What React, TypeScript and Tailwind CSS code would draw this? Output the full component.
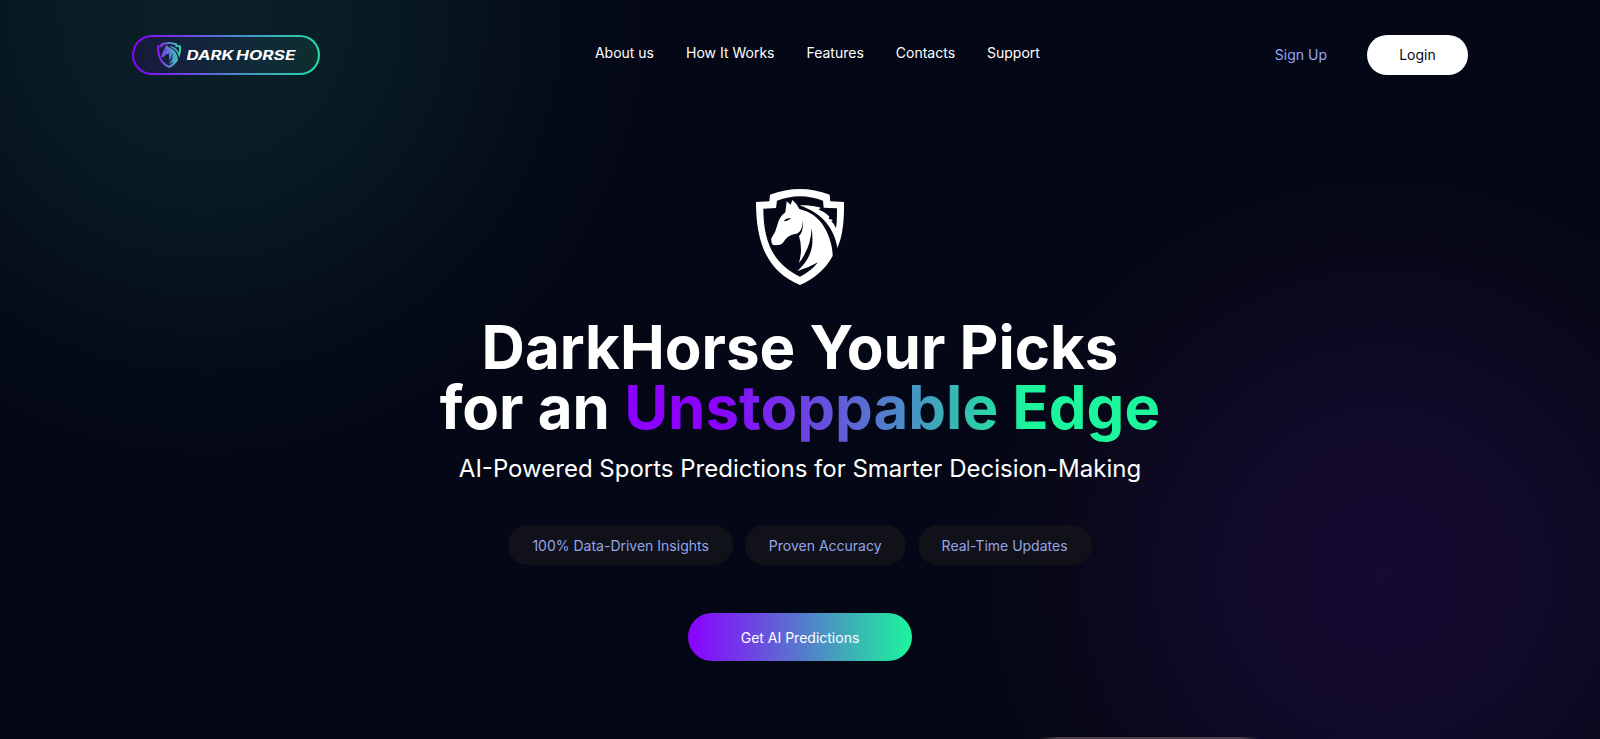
import React from "react";

const navItems = ["About us", "How It Works", "Features", "Contacts", "Support"];
const chips = ["100% Data-Driven Insights", "Proven Accuracy", "Real-Time Updates"];

function HorseShield({ className, fill = "#fff" }: { className?: string; fill?: string }) {
  return (
    <svg className={className} viewBox="168 87 264 288" preserveAspectRatio="none" aria-hidden="true">
      <defs>
        <linearGradient id="brand" gradientUnits="userSpaceOnUse" x1="168" y1="0" x2="432" y2="0">
          <stop offset="0.05" stopColor="#8a1cff" />
          <stop offset="0.5" stopColor="#5b80d8" />
          <stop offset="1" stopColor="#2fe0a5" />
        </linearGradient>
      </defs>
      <path
        fill={fill}
        d="M210 104Q300 70 389 104L391 124L432 126C433 180 428 230 412 264C404 210 370 160 298 136C320 134 345 137 362 143L356 149C370 153 380 161 388 170L386 176L399 180L394 184Q403 192 408 204Q411 190 411 145L371 143L369 122Q300 95 231 122L228 144L190 146C190 245 220 312 300 350Q332 335 354 307Q325 324 292 333C320 308 335 280 337 250Q338 225 335 204Q333 262 297 309Q309 265 297 228Q311 215 309 180Q308 215 290 221C265 224 258 235 250 247Q245 256 228 256L219 255Q212 247 214 235Q228 215 232 195Q238 170 256 157L260 124L272 134L277 120Q290 130 298 147C330 155 355 172 372 200C390 230 398 262 398 288C375 330 340 358 300 375C205 335 168 255 168 126L208 124Z"
      />
      <path d="M251 184Q258 174 273 174Q266 183 251 184Z" fill="#050816" />
    </svg>
  );
}

function Logo() {
  return (
    <a
      href="#"
      className="flex h-10 w-[188px] items-center rounded-full border-2 border-transparent pl-[23px] [background:linear-gradient(90deg,#171a3b,#12283a_50%,#0d2f30)_padding-box,linear-gradient(90deg,#8b00ff,#4e86cc_55%,#22e3a3)_border-box]"
    >
      <HorseShield className="h-[26px] w-6 shrink-0" fill="url(#brand)" />
      <svg
        className="ml-[5px] h-3.5 w-[112px] shrink-0 font-['Inter'] text-[12.5px] font-bold italic"
        viewBox="0 0 112 14"
        fill="#fff"
      >
        <text x="0.5" y="12" textLength="47" lengthAdjust="spacingAndGlyphs">DARK</text>
        <text x="50" y="12" textLength="59.5" lengthAdjust="spacingAndGlyphs">HORSE</text>
      </svg>
    </a>
  );
}

export default function App() {
  return (
    <div className="flex h-[739px] w-full flex-col overflow-hidden bg-[#040715] bg-[radial-gradient(circle_at_205px_15px,#0a1f28_0px,#091d26_120px,#071620_230px,#050d1a_330px,#040916_410px,transparent_490px),radial-gradient(circle_at_1384px_575px,#170930_0px,#130a2d_110px,#0e0924_220px,#080819_330px,#050716_400px,transparent_480px)] font-['Inter',sans-serif] text-white">
      <header className="mx-auto flex w-[1336px] items-center justify-between pt-[35px]">
        <Logo />
        <nav className="-mt-1 ml-[40px] flex gap-8 text-sm leading-5">
          {navItems.map((item) => (
            <a key={item} href="#">{item}</a>
          ))}
        </nav>
        <div className="flex items-center gap-10 text-sm">
          <a href="#" className="text-[#92a7f5]">Sign Up</a>
          <a href="#" className="flex h-10 w-[101px] items-center justify-center rounded-full bg-white text-[#050816]">Login</a>
        </div>
      </header>

      <main className="flex flex-1 flex-col items-center pt-[114px]">
        <HorseShield className="h-24 w-[88px]" />
        <h1 className="mt-8 text-center text-[60px] leading-[60px] font-bold whitespace-nowrap">
          DarkHorse Your Picks
          <br />
          for an{" "}
          <span className="bg-[linear-gradient(90deg,#8b00ff_17%,#4e86c8_51%,#1cf59c_75%)] bg-clip-text text-transparent">
            Unstoppable Edge
          </span>
        </h1>
        <p className="mt-4 text-2xl leading-8">AI-Powered Sports Predictions for Smarter Decision-Making</p>
        <div className="mt-10 flex gap-3">
          {chips.map((chip) => (
            <span key={chip} className="flex h-10 items-center rounded-full bg-[#101119] px-6 pt-0.5 text-sm text-[#94a5e8]">
              {chip}
            </span>
          ))}
        </div>
        <button className="mt-12 h-12 w-56 rounded-full bg-[linear-gradient(90deg,#8b00ff,#4e8cc6_58%,#1cf59c)] pt-0.5 text-sm">
          Get AI Predictions
        </button>
      </main>
      <div className="ml-[1040px] h-0.5 w-[218px] bg-[linear-gradient(90deg,transparent,#454049_8%,#454049_92%,transparent)]" />
    </div>
  );
}
